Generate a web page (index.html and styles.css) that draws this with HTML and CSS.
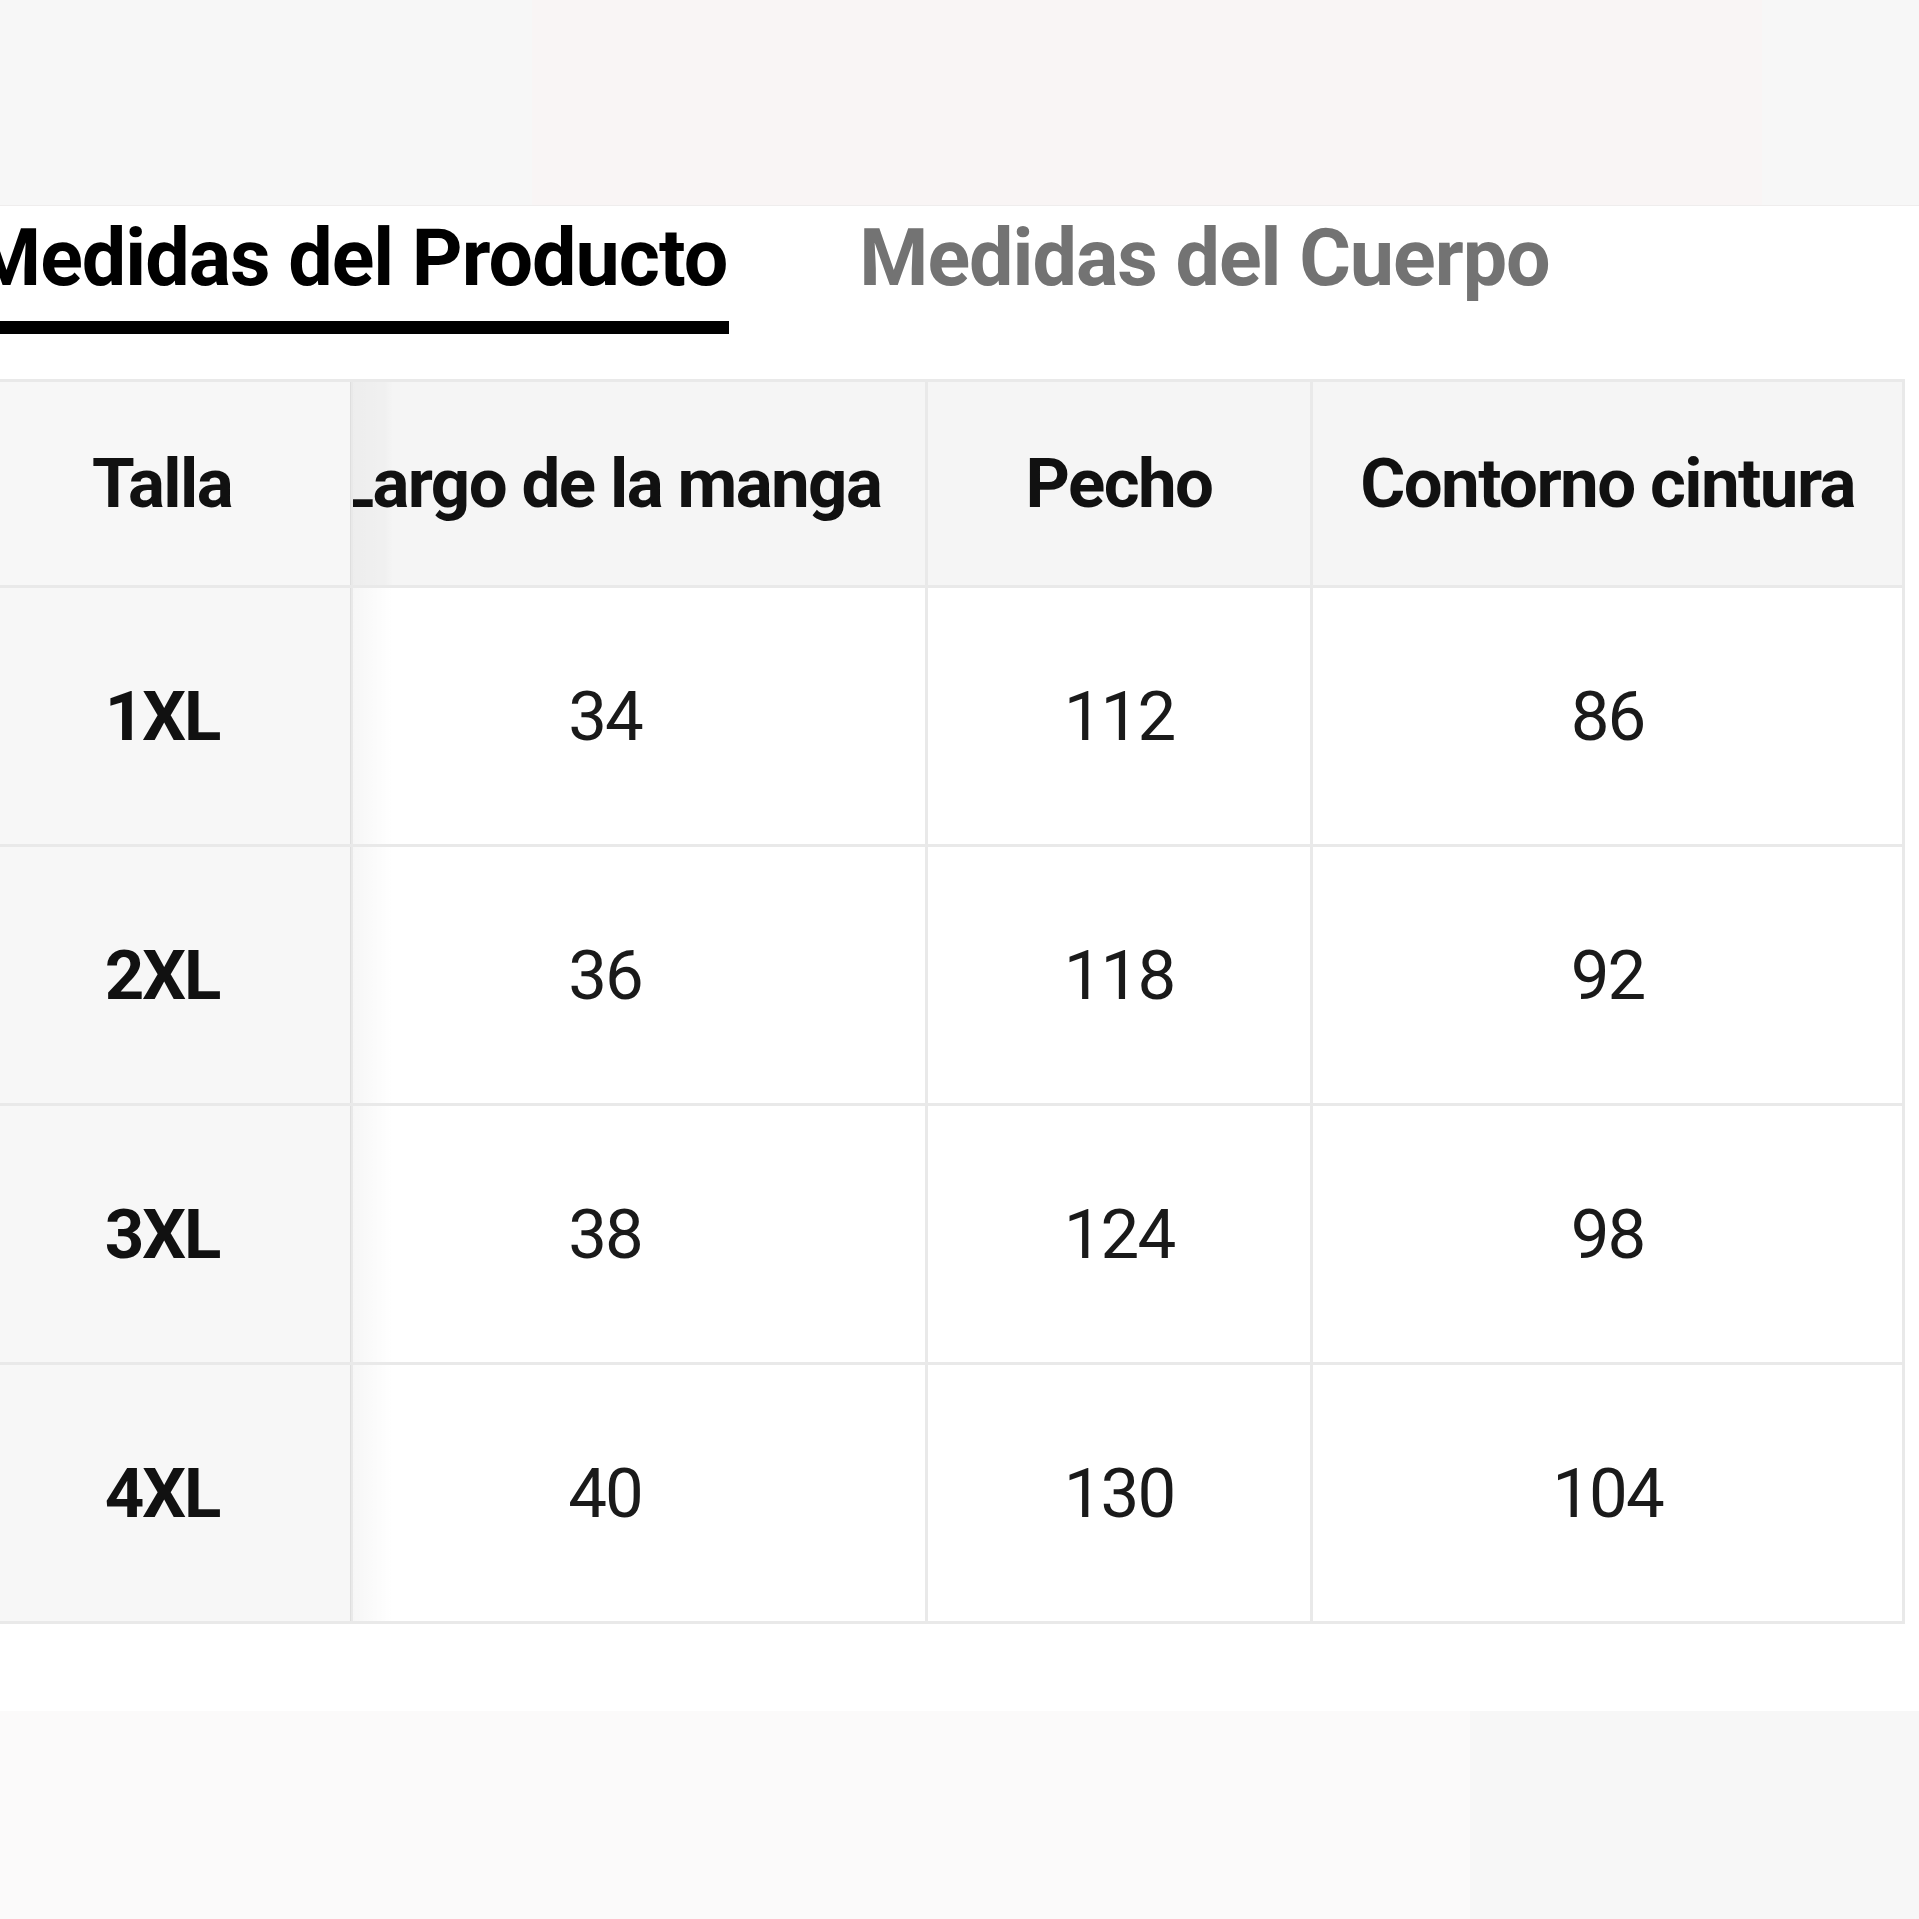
FILE: index.html
```html
<!DOCTYPE html>
<html lang="es">
<head>
<meta charset="utf-8">
<title>Medidas</title>
<link rel="stylesheet" href="styles.css">
</head>
<body>
<div class="page">
  <div class="topband">
    <div class="tb-left"></div>
    <div class="tb-mid"></div>
    <div class="tb-right"></div>
  </div>
  <div class="tabs">
    <div class="tab active">Medidas del Producto</div>
    <div class="tab">Medidas del Cuerpo</div>
  </div>
  <div class="sizes">
    <div class="cell c0 head">Talla</div>
    <div class="cell c1 head"><span>Largo de la manga</span></div>
    <div class="cell head">Pecho</div>
    <div class="cell head">Contorno cintura</div>

    <div class="cell c0 size">1XL</div>
    <div class="cell c1"><span>34</span></div>
    <div class="cell">112</div>
    <div class="cell">86</div>

    <div class="cell c0 size">2XL</div>
    <div class="cell c1"><span>36</span></div>
    <div class="cell">118</div>
    <div class="cell">92</div>

    <div class="cell c0 size">3XL</div>
    <div class="cell c1"><span>38</span></div>
    <div class="cell">124</div>
    <div class="cell">98</div>

    <div class="cell c0 size">4XL</div>
    <div class="cell c1"><span>40</span></div>
    <div class="cell">130</div>
    <div class="cell">104</div>
  </div>
  <div class="spacer"></div>
  <div class="bottomband">
    <div class="bb-left"></div>
    <div class="bb-right"></div>
  </div>
</div>
</body>
</html>
```

FILE: styles.css
```css
html, body {
  margin: 0;
  padding: 0;
  background: #ffffff;
}
body {
  width: 1919px;
  height: 1919px;
  overflow: hidden;
  font-family: Roboto, "Liberation Sans", Arial, sans-serif;
}
.page {
  display: flex;
  flex-direction: column;
  width: 1919px;
  height: 1919px;
  overflow: hidden;
}
.topband {
  display: flex;
  height: 205px;
  flex: none;
  border-bottom: 1px solid #efeded;
}
.tb-left { width: 532px; background: #f7f7f7; }
.tb-mid { width: 1230px; background: #f9f5f5; }
.tb-right { flex: 1; background: #f7f7f7; }

.tabs {
  display: flex;
  gap: 132px;
  margin-left: -28px;
  padding-top: 13px;
  height: 160px;
  flex: none;
}
.tab {
  position: relative;
  font-size: 79px;
  line-height: 79px;
  font-weight: 700;
  letter-spacing: -1px;
  color: #737373;
  white-space: nowrap;
  height: 116px;
}
.tab.active {
  color: #000000;
}
.tab.active::after {
  content: "";
  position: absolute;
  left: 0;
  right: -2px;
  top: 102px;
  height: 13px;
  background: #000000;
}

.sizes {
  display: grid;
  grid-template-columns: 376px 572px 382px 589px;
  grid-template-rows: 203px repeat(4, 256px);
  gap: 3px;
  padding: 3px 3px 3px 0;
  margin-left: -26px;
  width: max-content;
  background: #e9e9e9;
  flex: none;
}
.cell {
  display: flex;
  align-items: center;
  justify-content: center;
  background: #ffffff;
  font-size: 69px;
  letter-spacing: -2px;
  color: #1a1a1a;
  white-space: nowrap;
  overflow: hidden;
}
.cell.head {
  background: #f5f5f5;
  font-weight: 700;
  color: #111111;
  letter-spacing: -1.6px;
}
.cell.c0 {
  background: #f7f7f7;
  font-weight: 700;
  color: #111111;
  box-shadow: 1px 0 0 #dedede;
}
.cell.c1 {
  position: relative;
  padding-right: 68px;
}
.cell.c1.head {
  padding-right: 60px;
}
.cell.c1::before {
  content: "";
  position: absolute;
  left: 0;
  top: 0;
  bottom: 0;
  width: 40px;
  background: linear-gradient(to right, rgba(0,0,0,0.035), rgba(0,0,0,0));
}
.cell.c1.head::before {
  background: linear-gradient(to right, rgba(0,0,0,0.03), rgba(0,0,0,0.02) 80%, rgba(0,0,0,0));
}
.spacer {
  height: 87px;
  flex: none;
}
.bottomband {
  display: flex;
  flex: 1;
}
.bb-left { width: 1470px; background: #fbfafa; }
.bb-right { flex: 1; background: #f7f7f7; }
```
